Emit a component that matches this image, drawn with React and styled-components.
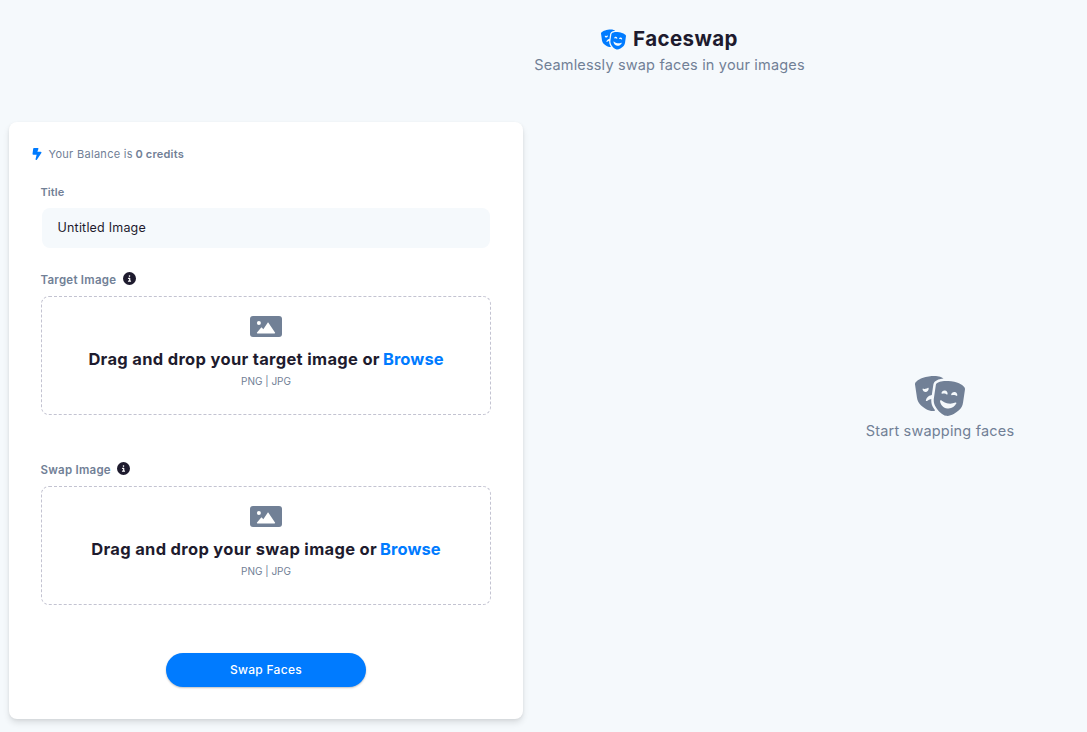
import React from "react";
import styled, { createGlobalStyle } from "styled-components";
import { FaMasksTheater, FaBoltLightning, FaCircleInfo } from "react-icons/fa6";

const colors = {
  page: "#f5f9fc",
  card: "#ffffff",
  ink: "#1e1b2e",
  muted: "#718096",
  blue: "#007bff",
  dash: "#c3c3d1",
};

const GlobalStyle = createGlobalStyle`
  *, *::before, *::after { box-sizing: border-box; }
  html, body { margin: 0; padding: 0; overflow: hidden; }
  body {
    background: ${colors.page};
    font-family: Inter, "Open Sans", sans-serif;
    color: ${colors.ink};
  }
  svg { display: block; flex: none; }
`;

const Page = styled.div`
  width: 1339px;
  height: 732px;
  display: flex;
  flex-direction: column;
  overflow: hidden;
`;

const Header = styled.header`
  height: 122px;
  padding-top: 24px;
  display: flex;
  flex-direction: column;
  align-items: center;
`;

const Heading = styled.h1`
  margin: 0;
  display: flex;
  align-items: center;
  gap: 7px;
  font-size: 20.5px;
  line-height: 30px;
  font-weight: 700;
  letter-spacing: 0.42px;

  svg { color: ${colors.blue}; }
`;

const Tagline = styled.p`
  margin: 0;
  font-size: 14.5px;
  line-height: 22px;
  letter-spacing: 0.17px;
  white-space: nowrap;
  color: ${colors.muted};
`;

const Columns = styled.main`
  display: flex;
  align-items: flex-start;
  gap: 18px;
  padding-left: 9px;
`;

const Card = styled.section`
  width: 514px;
  height: 597px;
  padding: 22px 32px 0;
  background: ${colors.card};
  border-radius: 8px;
  box-shadow: 0 4px 6px rgba(0, 0, 0, 0.1), 0 1px 3px rgba(0, 0, 0, 0.06);
`;

const Balance = styled.div`
  display: flex;
  align-items: center;
  height: 20px;
  margin-left: -10px;
  font-size: 11px;
  letter-spacing: 0.3px;
  color: ${colors.muted};

  svg { color: ${colors.blue}; margin-right: 5.5px; }
  strong { font-weight: 600; letter-spacing: 0.2px; margin-left: 2.5px; }
`;

const Field = styled.div`
  margin-top: ${(p) => p.$gap}px;
`;

const Label = styled.label`
  display: flex;
  align-items: center;
  gap: 6.5px;
  height: 16px;
  margin-left: -0.5px;
  font-size: ${(p) => p.$size}px;
  font-weight: 600;
  letter-spacing: ${(p) => p.$tracking}px;
  color: ${colors.muted};

  svg { color: ${colors.ink}; margin-top: -3px; }
`;

const TitleInput = styled.input`
  display: block;
  width: 448px;
  height: 40px;
  margin: 8px 1px 0;
  padding: 0 15.5px 2px;
  border: 0;
  border-radius: 8px;
  outline: none;
  background: ${colors.page};
  color: ${colors.ink};
  font-family: inherit;
  font-size: 12.5px;
  letter-spacing: 0.2px;
`;

const DropZone = styled.div`
  height: 119px;
  margin-top: 8px;
  padding-top: 19px;
  display: flex;
  flex-direction: column;
  align-items: center;
  border: 1px dashed ${colors.dash};
  border-radius: 8px;
`;

const Prompt = styled.div`
  display: flex;
  gap: 3px;
  margin-top: 10px;
  font-size: 16.5px;
  line-height: 24px;
  font-weight: 700;
  letter-spacing: 0.32px;
  white-space: nowrap;
`;

const Browse = styled.span`
  color: ${colors.blue};
  letter-spacing: 0.08px;
`;

const Formats = styled.div`
  margin-top: 2px;
  font-size: 10px;
  line-height: 16px;
  color: ${colors.muted};
`;

const SubmitButton = styled.button`
  display: block;
  width: 200px;
  height: 34px;
  margin: 48px auto 0;
  padding: 0 0 2px;
  border: 0;
  border-radius: 17px;
  background: ${colors.blue};
  box-shadow: 0 1px 2px rgba(0, 0, 0, 0.25);
  color: #fff;
  font-family: inherit;
  font-size: 12px;
  font-weight: 500;
  letter-spacing: 0.28px;
`;

const Preview = styled.section`
  flex: 1;
  height: 597px;
  padding-top: 249px;
  display: flex;
  flex-direction: column;
  align-items: center;
  font-size: 14.5px;
  line-height: 22px;
  letter-spacing: 0.18px;
  color: ${colors.muted};

  svg { margin-bottom: -1px; }
`;

const PictureIcon = () => (
  <svg width="32" height="21" viewBox="0 0 32 21">
    <rect width="32" height="21" rx="3" fill={colors.muted} />
    <circle cx="8.9" cy="7" r="2" fill="#fff" />
    <path
      d="M7.4 17.4c-.5 0-.7-.5-.4-.9l4-4.700c.3-.4.700-.4 1 0l1.300 1.500L17.500 6.900c.3-.5.8-.5 1.100 0l6.400 9.700c.3.400 0 .8-.4.800z"
      fill="#fff"
    />
  </svg>
);

const ImageField = ({ label, noun, gap }) => (
  <Field $gap={gap}>
    <Label $size={11.5} $tracking={0.25}>
      {label}
      <FaCircleInfo size={13} />
    </Label>
    <DropZone>
      <PictureIcon />
      <Prompt>
        <span>Drag and drop your {noun} image or</span>
        <Browse>Browse</Browse>
      </Prompt>
      <Formats>PNG | JPG</Formats>
    </DropZone>
  </Field>
);

export default function App() {
  return (
    <>
      <GlobalStyle />
      <Page>
        <Header>
          <Heading>
            <FaMasksTheater size={25} />
            Faceswap
          </Heading>
          <Tagline>Seamlessly swap faces in your images</Tagline>
        </Header>
        <Columns>
          <Card>
            <Balance>
              <FaBoltLightning size={12} />
              Your Balance is <strong>0 credits</strong>
            </Balance>
            <Field $gap={20}>
              <Label $size={11} $tracking={0.1}>Title</Label>
              <TitleInput defaultValue="Untitled Image" />
            </Field>
            <ImageField label="Target Image" noun="target" gap={24} />
            <ImageField label="Swap Image" noun="swap" gap={47} />
            <SubmitButton>Swap Faces</SubmitButton>
          </Card>
          <Preview>
            <FaMasksTheater size={50} />
            Start swapping faces
          </Preview>
        </Columns>
      </Page>
    </>
  );
}
